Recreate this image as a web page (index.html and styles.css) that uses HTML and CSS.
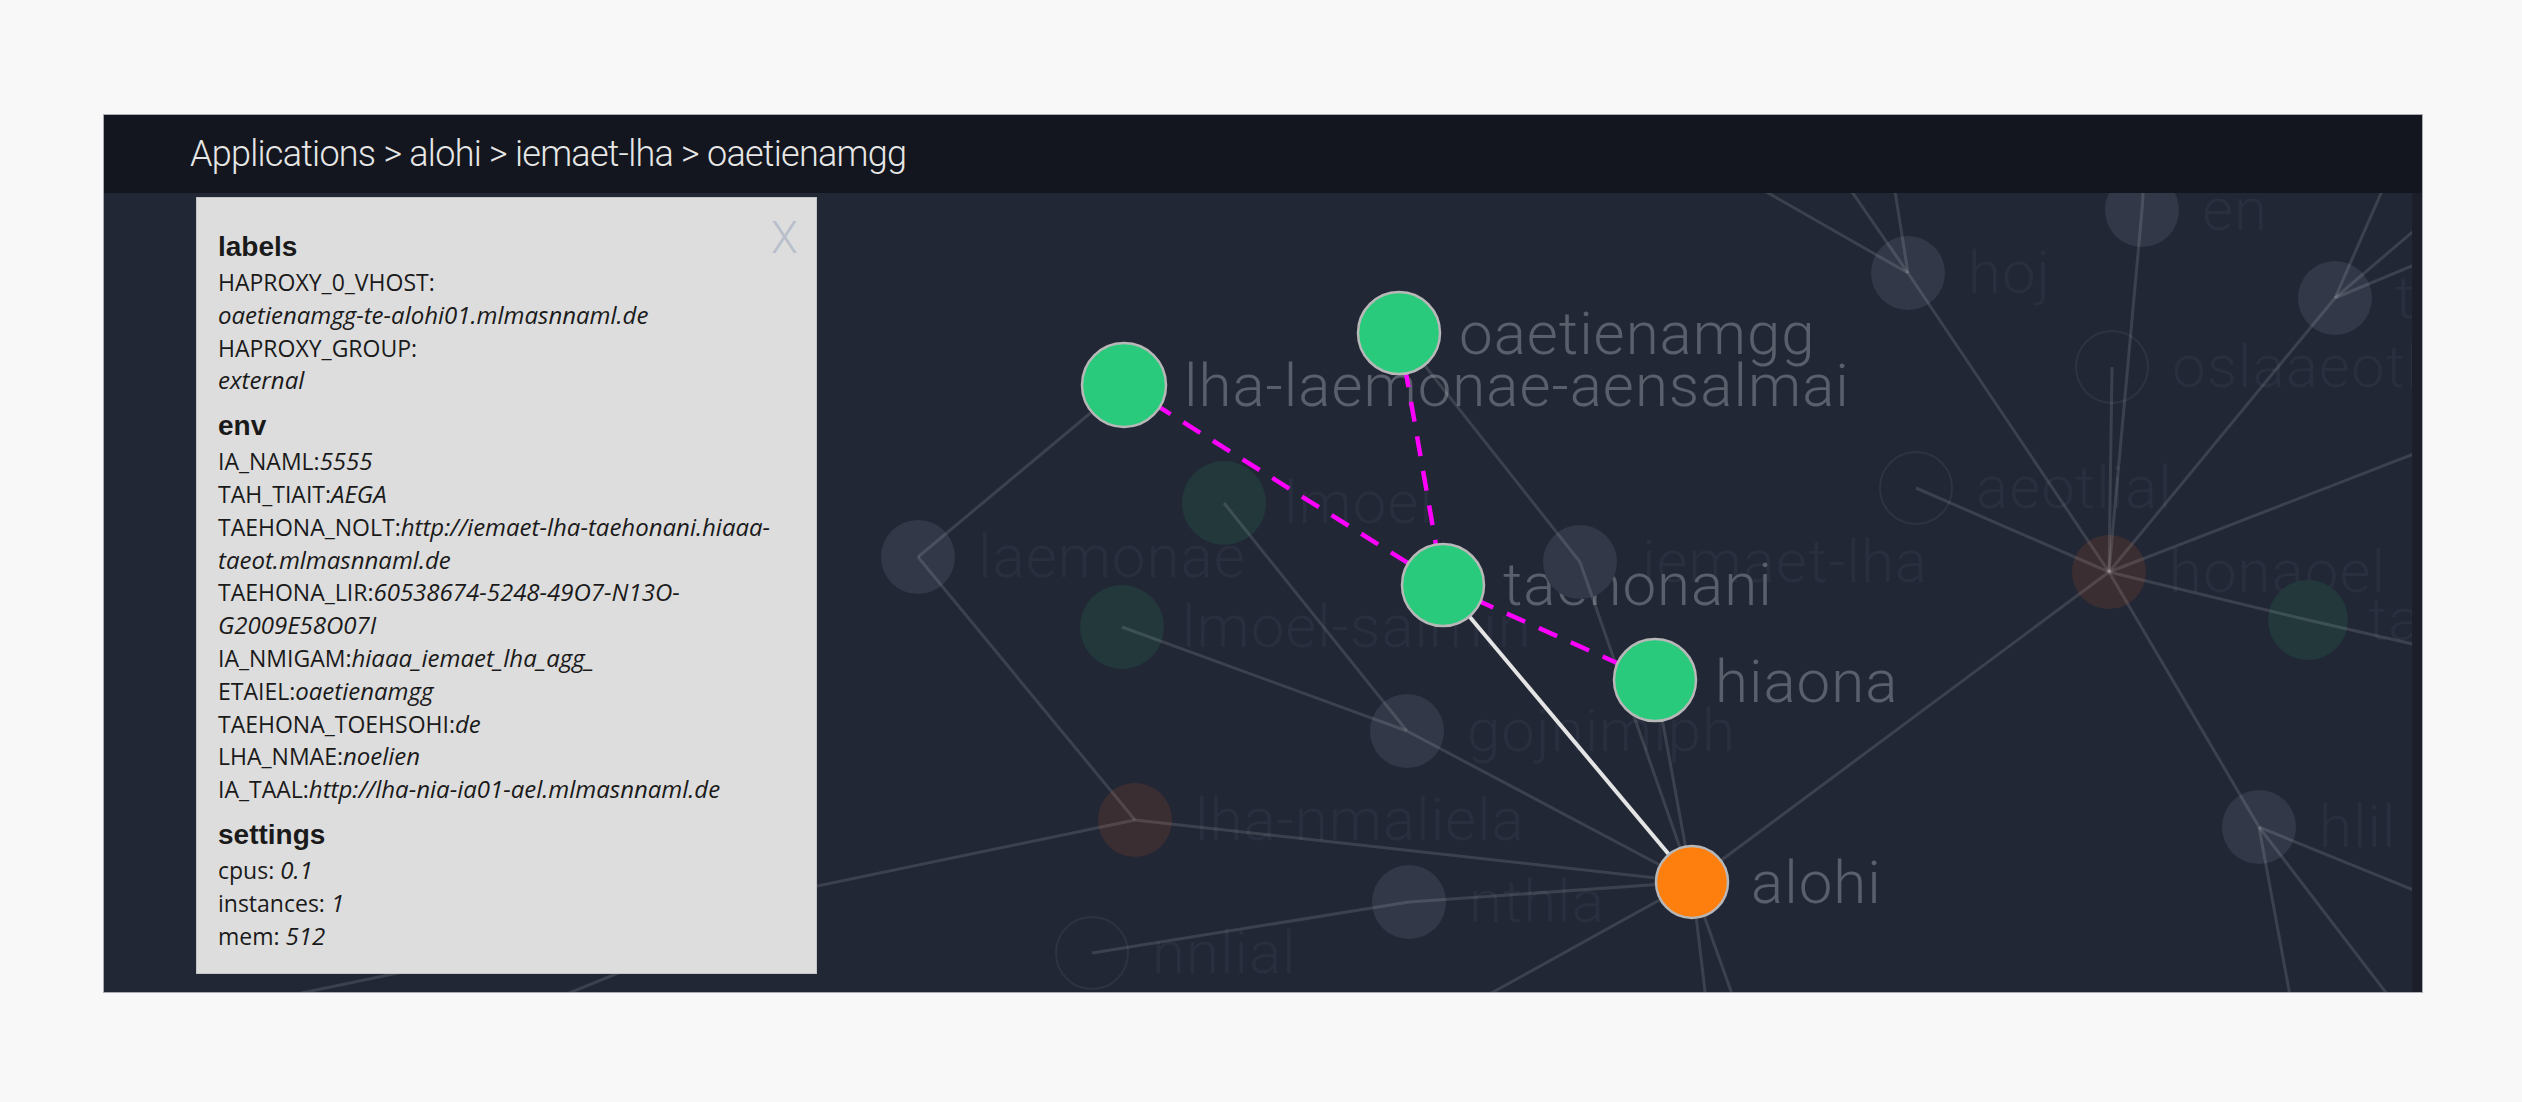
FILE: index.html
```html
<!DOCTYPE html>
<html lang="en">
<head>
<meta charset="utf-8">
<title>Applications graph</title>
<link rel="stylesheet" href="styles.css">
</head>
<body>
<div class="app">
  <header class="crumbs">Applications &gt; alohi &gt; iemaet-lha &gt; oaetienamgg</header>
  <div class="stage">
    <svg class="graph" viewBox="104 193 2308 799" width="2308" height="799" xmlns="http://www.w3.org/2000/svg">
      <g class="labels-bg">
        <text x="978" y="577">laemonae</text>
        <text x="1284" y="523">lmoel</text>
        <text x="1182" y="647">lmoel-salmin</text>
        <text x="1642" y="582">iemaet-lha</text>
        <text x="1467" y="751">gojnimiph</text>
        <text x="1195" y="840">lha-nmaliela</text>
        <text x="1469" y="922">nthla</text>
        <text x="1152" y="973">nnlial</text>
        <text x="1968" y="293">hoj</text>
        <text x="2202" y="230">en</text>
        <text x="2172" y="387">oslaaeotl</text>
        <text x="2395" y="318">tholi</text>
        <text x="1976" y="508">aeotlial</text>
        <text x="2169" y="592">honaoel</text>
        <text x="2368" y="640">taeh</text>
        <text x="2319" y="847">hlil</text>
      </g>
      <g class="labels-fg">
        <text x="1184" y="406">lha-laemonae-aensalmai</text>
        <text x="1459" y="354">oaetienamgg</text>
        <text x="1503" y="605">taehonani</text>
        <text x="1715" y="702">hiaona</text>
        <text x="1751" y="903">alohi</text>
      </g>
      <g class="nodes-bg">
        <circle class="nb-gray" cx="918" cy="557" r="37"/>
        <circle class="nb-green" cx="1224" cy="503" r="42"/>
        <circle class="nb-green" cx="1122" cy="627" r="42"/>
        <circle class="nb-gray" cx="1580" cy="562" r="37"/>
        <circle class="nb-gray" cx="1407" cy="731" r="37"/>
        <circle class="nb-brown" cx="1135" cy="820" r="37"/>
        <circle class="nb-gray" cx="1409" cy="902" r="37"/>
        <circle class="nb-ring" cx="1092" cy="953" r="36"/>
        <circle class="nb-gray" cx="1908" cy="273" r="37"/>
        <circle class="nb-gray" cx="2142" cy="210" r="37"/>
        <circle class="nb-ring" cx="2112" cy="367" r="36"/>
        <circle class="nb-gray" cx="2335" cy="298" r="37"/>
        <circle class="nb-ring" cx="1916" cy="488" r="36"/>
        <circle class="nb-brown" cx="2109" cy="572" r="37"/>
        <circle class="nb-green" cx="2308" cy="620" r="40"/>
        <circle class="nb-gray" cx="2259" cy="827" r="37"/>
      </g>
      <g class="edges-bg">
        <line x1="1124" y1="385" x2="918" y2="557"/>
        <line x1="918" y1="557" x2="1135" y2="820"/>
        <line x1="1135" y1="820" x2="104" y2="1034"/>
        <line x1="1135" y1="820" x2="1692" y2="882"/>
        <line x1="1224" y1="503" x2="1407" y2="731"/>
        <line x1="1122" y1="627" x2="1407" y2="731"/>
        <line x1="1407" y1="731" x2="1692" y2="882"/>
        <line x1="1399" y1="333" x2="1580" y2="562"/>
        <line x1="1580" y1="562" x2="1692" y2="882"/>
        <line x1="1655" y1="680" x2="1692" y2="882"/>
        <line x1="1092" y1="953" x2="1409" y2="902"/>
        <line x1="1409" y1="902" x2="1692" y2="882"/>
        <line x1="1692" y1="882" x2="2109" y2="572"/>
        <line x1="1692" y1="882" x2="1300" y2="1099"/>
        <line x1="1692" y1="882" x2="1712" y2="1050"/>
        <line x1="1692" y1="882" x2="1752" y2="1050"/>
        <line x1="2109" y1="572" x2="1908" y2="273"/>
        <line x1="2109" y1="572" x2="2142" y2="210"/>
        <line x1="2109" y1="572" x2="2112" y2="367"/>
        <line x1="2109" y1="572" x2="2335" y2="298"/>
        <line x1="2109" y1="572" x2="1916" y2="488"/>
        <line x1="2109" y1="572" x2="2308" y2="620"/>
        <line x1="2308" y1="620" x2="2430" y2="648"/>
        <line x1="2109" y1="572" x2="2259" y2="827"/>
        <line x1="2109" y1="572" x2="2450" y2="440"/>
        <line x1="1908" y1="273" x2="1700" y2="154"/>
        <line x1="1908" y1="273" x2="1830" y2="160"/>
        <line x1="1908" y1="273" x2="1890" y2="160"/>
        <line x1="2142" y1="210" x2="2146" y2="150"/>
        <line x1="2335" y1="298" x2="2400" y2="150"/>
        <line x1="2335" y1="298" x2="2450" y2="200"/>
        <line x1="2335" y1="298" x2="2450" y2="250"/>
        <line x1="2259" y1="827" x2="2450" y2="905"/>
        <line x1="2259" y1="827" x2="2300" y2="1050"/>
        <line x1="2259" y1="827" x2="2430" y2="1050"/>
        <line x1="760" y1="915" x2="540" y2="1005"/>
      </g>
      <g class="edges-fg">
        <line class="dash" x1="1124" y1="385" x2="1443" y2="585"/>
        <line class="dash" x1="1399" y1="333" x2="1443" y2="585"/>
        <line class="dash" x1="1443" y1="585" x2="1655" y2="680"/>
        <line class="solid" x1="1443" y1="585" x2="1692" y2="882"/>
      </g>
      <g class="nodes-fg">
        <circle class="nf-green" cx="1124" cy="385" r="42"/>
        <circle class="nf-green" cx="1399" cy="333" r="41"/>
        <circle class="nf-green" cx="1443" cy="585" r="41"/>
        <circle class="nf-green" cx="1655" cy="680" r="41"/>
        <circle class="nf-orange" cx="1692" cy="882" r="36"/>
      </g>
    </svg>
    <div class="scrollbar"></div>
    <aside class="info">
      <span class="close">X</span>
      <section class="group">
        <h3>labels</h3>
        <div class="line">HAPROXY_0_VHOST:</div>
        <div class="line"><em>oaetienamgg-te-alohi01.mlmasnnaml.de</em></div>
        <div class="line">HAPROXY_GROUP:</div>
        <div class="line"><em>external</em></div>
      </section>
      <section class="group">
        <h3>env</h3>
        <div class="line">IA_NAML:<em>5555</em></div>
        <div class="line">TAH_TIAIT:<em>AEGA</em></div>
        <div class="line">TAEHONA_NOLT:<em>http://iemaet-lha-taehonani.hiaaa-</em></div>
        <div class="line"><em>taeot.mlmasnnaml.de</em></div>
        <div class="line">TAEHONA_LIR:<em>60538674-5248-49O7-N13O-</em></div>
        <div class="line"><em>G2009E58O07I</em></div>
        <div class="line">IA_NMIGAM:<em>hiaaa_iemaet_lha_agg_</em></div>
        <div class="line">ETAIEL:<em>oaetienamgg</em></div>
        <div class="line">TAEHONA_TOEHSOHI:<em>de</em></div>
        <div class="line">LHA_NMAE:<em>noelien</em></div>
        <div class="line">IA_TAAL:<em>http://lha-nia-ia01-ael.mlmasnnaml.de</em></div>
      </section>
      <section class="group">
        <h3>settings</h3>
        <div class="line">cpus: <em>0.1</em></div>
        <div class="line">instances: <em>1</em></div>
        <div class="line">mem: <em>512</em></div>
      </section>
    </aside>
  </div>
</div>
</body>
</html>
```

FILE: styles.css
```css
html, body {
  margin: 0;
  padding: 0;
  background: #f8f8f8;
}
body {
  padding: 114px 0 0 103px;
  height: 1102px;
  box-sizing: border-box;
  overflow: hidden;
}
.app {
  width: 2320px;
  border: 1px solid #a9acb2;
  background: #222736;
  box-sizing: border-box;
}
.crumbs {
  height: 78px;
  background: #13161e;
  display: flex;
  align-items: center;
  padding-left: 86px;
  font-family: Roboto, "Liberation Sans", sans-serif;
  font-weight: 300;
  font-size: 36px;
  letter-spacing: -0.75px;
  color: #e6e6e6;
  white-space: nowrap;
}
.stage {
  position: relative;
  display: flex;
  height: 799px;
  overflow: hidden;
}
.graph {
  flex: 0 0 2308px;
  display: block;
  background: #222736;
}
.scrollbar {
  flex: 0 0 10px;
  background: #1c1f2a;
}
.graph text {
  font-family: Roboto, "Liberation Sans", sans-serif;
  font-weight: 300;
  font-size: 60px;
  letter-spacing: 1px;
}
.labels-bg text { fill: #2a2f3f; }
.labels-fg text { fill: #5a5f6c; }
.nb-gray { fill: #333848; }
.nb-green { fill: #23383b; }
.nb-brown { fill: #3a2e32; }
.nb-ring { fill: none; stroke: #2e3343; stroke-width: 2; }
.edges-bg line {
  stroke: #ffffff;
  stroke-opacity: 0.12;
  stroke-width: 3;
}
.dash {
  stroke: #ff00ff;
  stroke-width: 4.5;
  stroke-dasharray: 20 15;
}
.solid {
  stroke: #e4e4e4;
  stroke-width: 4;
}
.nf-green { fill: #29ca7b; stroke: #b8b8b8; stroke-width: 2.5; }
.nf-orange { fill: #ff7f0e; stroke: #b8b8b8; stroke-width: 2.5; }

.info {
  position: absolute;
  left: 92px;
  top: 4px;
  width: 621px;
  box-sizing: border-box;
  background: #dddddd;
  border: 1px solid #c4c4c4;
  padding: 31px 21px 21px 21px;
  color: #1a1a1a;
  font-family: "Open Sans", "Noto Sans", sans-serif;
  font-size: 23px;
}
.close {
  position: absolute;
  right: 18px;
  top: 14px;
  font-family: Roboto, "Liberation Sans", sans-serif;
  font-weight: 300;
  font-size: 44px;
  line-height: 52px;
  color: #b8bfca;
}
.group + .group { margin-top: 11px; }
.group h3 {
  margin: 0 0 1px 0;
  font-family: "Liberation Sans", Arial, sans-serif;
  font-weight: bold;
  font-size: 28px;
  line-height: 36px;
}
.line {
  line-height: 32.8px;
  white-space: nowrap;
}
.line em {
  font-style: italic;
  font-size: 24px;
}
```
